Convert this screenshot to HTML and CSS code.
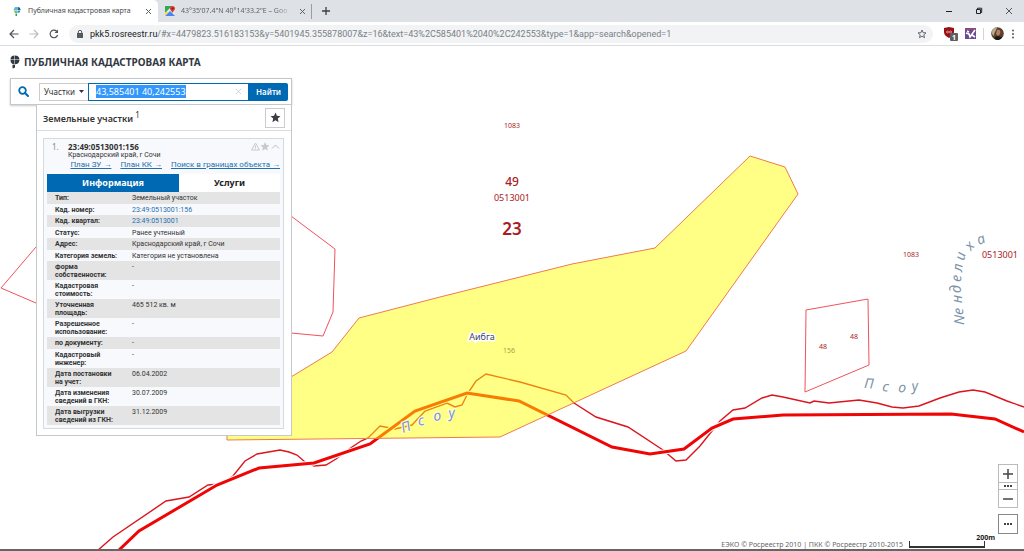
FILE: index.html
```html
<!DOCTYPE html>
<html lang="ru">
<head>
<meta charset="utf-8">
<title>Публичная кадастровая карта</title>
<link rel="stylesheet" href="styles.css">
</head>
<body>
<header class="browser">
  <div class="tabs">
    <div class="tab tab-active">
      <svg width="10" height="10" viewBox="0 0 10 10" aria-hidden="true"><path d="M3 1h2v3H1.500z" fill="#58b7e8"/><path d="M5.500 1a3 3 0 0 1 3 3h-3z" fill="#1b5f94"/><path d="M1.500 4.500H5V7H3z" fill="#7cc84c"/><path d="M5.500 4.500h3a3 3 0 0 1-3 2.500z" fill="#2c8fd0"/><path d="M3.500 7.500H5V10H3.500z" fill="#2e9c66"/></svg>
      <span class="tab-title">Публичная кадастровая карта</span>
      <button class="tab-close" aria-label="Закрыть вкладку"><svg width="7" height="7" viewBox="0 0 7 7"><path d="M1 1l5 5M6 1L1 6" stroke="#5f6368"/></svg></button>
    </div>
    <div class="tab">
      <svg width="10" height="10" viewBox="0 0 10 10" aria-hidden="true"><path d="M0 0h10v10H0z" fill="#e8e8e8"/><path d="M0 0h7L0 7z" fill="#34a853"/><path d="M0 10l5-5 5 5z" fill="#4285f4"/><path d="M0 6v4l4-4z" fill="#fbd34d"/><path d="M7.500 7C7 5 5 4.500 5 2.500a2.500 2.500 0 0 1 5 0C10 4.500 8 5 7.500 7z" fill="#dd3b2d"/><circle cx="7.500" cy="2.500" r="1" fill="#7b1d16"/></svg>
      <span class="tab-title tab-title-fade">43°35'07.4"N 40°14'33.2"E – Goo</span>
      <button class="tab-close" aria-label="Закрыть вкладку"><svg width="7" height="7" viewBox="0 0 7 7"><path d="M1 1l5 5M6 1L1 6" stroke="#5f6368"/></svg></button>
    </div>
    <button class="new-tab" aria-label="Новая вкладка"><svg width="8" height="8" viewBox="0 0 8 8"><path d="M4 0v8M0 4h8" stroke="#3c4043" stroke-width="1.300"/></svg></button>
    <div class="window-buttons">
      <button aria-label="Свернуть"><svg width="8" height="8" viewBox="0 0 8 8"><path d="M1 4.500h6" stroke="#222"/></svg></button>
      <button aria-label="Восстановить"><svg width="8" height="8" viewBox="0 0 8 8"><path d="M1.500 2.500h4v4h-4zM2.500 2V1.200h4.200v4.300H6" fill="none" stroke="#222"/></svg></button>
      <button aria-label="Закрыть"><svg width="8" height="8" viewBox="0 0 8 8"><path d="M1 1l6 6M7 1L1 7" stroke="#333" stroke-width=".8"/></svg></button>
    </div>
  </div>
  <div class="toolbar">
    <button aria-label="Назад"><svg width="10" height="10" viewBox="0 0 10 10"><path d="M9.500 5H1.200M5 1L1 5l4 4" fill="none" stroke="#50545a" stroke-width="1.200"/></svg></button>
    <button aria-label="Вперёд"><svg width="10" height="10" viewBox="0 0 10 10"><path d="M.5 5h8.300M5 1l4 4-4 4" fill="none" stroke="#b9bcc0" stroke-width="1.200"/></svg></button>
    <button aria-label="Обновить"><svg width="10" height="10" viewBox="0 0 10 10"><path d="M8.600 6A3.800 3.800 0 1 1 7.600 2.200" fill="none" stroke="#50545a" stroke-width="1.200"/><path d="M9 .5V4H5.500z" fill="#50545a"/></svg></button>
    <div class="address">
      <svg width="6" height="8" viewBox="0 0 6 8" aria-hidden="true"><path d="M0 3h6v5H0z" fill="#55595e"/><path d="M1.300 3.200V2a1.700 1.700 0 0 1 3.400 0v1.200" fill="none" stroke="#55595e"/></svg>
      <p class="url"><span class="host">pkk5.rosreestr.ru</span>/#x=4479823.516183153&amp;y=5401945.355878007&amp;z=16&amp;text=43%2C585401%2040%2C242553&amp;type=1&amp;app=search&amp;opened=1</p>
      <button aria-label="Добавить в закладки"><svg width="10" height="10" viewBox="0 0 10 10"><path d="M5 1l1.100 2.700 2.900.2-2.200 1.900.7 2.900L5 7.100 2.500 8.700l.7-2.900L1 3.900l2.900-.2z" fill="none" stroke="#55595e" stroke-width=".9"/></svg></button>
    </div>
    <div class="extensions">
      <button aria-label="Блокировщик"><svg width="15" height="15" viewBox="0 0 15 15"><path d="M6 1l5 1v4c0 3-2 4.500-5 6-3-1.500-5-3-5-6V2z" fill="#991016"/><circle cx="4.500" cy="6" r="1" fill="none" stroke="#d99"/><circle cx="7.500" cy="6" r="1" fill="none" stroke="#d99"/><rect x="7" y="7" width="8" height="8" rx="1" fill="#5c6063"/><text x="9" y="14" class="badge-text">1</text></svg></button>
      <button aria-label="Расширение"><svg width="11" height="11" viewBox="0 0 11 11"><path d="M0 0h11v11H0z" fill="#6b4a94"/><path d="M0 0h11v2H0z" fill="#8b4a78"/><path d="M1 5l3 1 1 3 5-7M2 3l2 1M7 7l3 2" fill="none" stroke="#fff" stroke-width="1.600"/></svg></button>
      <span class="separator"></span>
      <button aria-label="Профиль"><svg width="13" height="13" viewBox="0 0 13 13"><circle cx="6.500" cy="6.500" r="6.300" fill="#5b4032"/><path d="M1 4c1-3 3-4 5-4 0 3-3 5-3 9-2-1-2.500-3-2-5z" fill="#b6aa8d"/><path d="M6 3c3-1 4 1 3 4l-2 2-2-2z" fill="#b9805e"/><path d="M3 11l3-2 5 1c-2 4-6 4-8 1z" fill="#191717"/></svg></button>
      <button aria-label="Меню"><svg width="4" height="10" viewBox="0 0 4 10" fill="#55595e"><circle cx="2" cy="1.500" r="1"/><circle cx="2" cy="5" r="1"/><circle cx="2" cy="8.500" r="1"/></svg></button>
    </div>
  </div>
</header>

<main class="page">
  <svg class="map" role="img" aria-label="Кадастровая карта">
    <g transform="translate(0 -46)">
      <path class="parcel-line" d="M36 247L1 288l35 15 150 20 105 10 32 3 10-24 2-63-44-33-160-60z"/>
      <path class="parcel-line" d="M806 310l62-11 1 66-64 27z"/>
      <path class="river-thin" d="M97 551L113 537 166 501 189 497 208 485 220 484 233 476 245 461 257 454 280 450 289 452 297 455 305 462 314 466 326 465 336 459 352 447 361 441 368 438 380 426 395 429 412 425 425 411 447 403 455 407 462 405 468 393 476 381 486 374 520 382 566 395 574 403 596 417 628 427 663 450 676 461 686 460 700 446 720 421 733 410 745 408 762 398 772 395 783 397 810 403 814 401 829 403 859 400 877 403 892 407 903 408 919 406 940 398 959 392 973 390 985 392 1007 401 1024 407"/>
      <path class="river-halo" d="M118 551L139 531 217 485 259 468 314 463 370 444 415 411 467 393 519 401 612 447 650 454 684 449 712 428 733 419 783 415 951 414 995 419 1024 432"/>
      <path class="river-thick" d="M118 551L139 531 217 485 259 468 314 463 370 444 415 411 467 393 519 401 612 447 650 454 684 449 712 428 733 419 783 415 951 414 995 419 1024 432"/>
      <path class="selected" d="M227 440V415L291 377 332 352 359 318 440 297 572 264 655 248 750 156 785 167 798 194 686 351 500 437z"/>
      <g class="red-labels">
        <text x="512" y="128" class="t7">1083</text>
        <text x="512" y="186" class="t12">49</text>
        <text x="512" y="201" class="t9">0513001</text>
        <text x="512" y="235" class="t17">23</text>
        <text x="911" y="257" class="t7">1083</text>
        <text x="1000" y="258" class="t9">0513001</text>
        <text x="823" y="349" class="t7">48</text>
        <text x="854" y="339" class="t7">48</text>
      </g>
      <text x="509" y="353" class="label-parcel">156</text>
      <text x="482" y="340" class="label-town">Аибга</text>
      <text class="label-water water-halo" x="403 419 434 449" y="433 426 421 418" rotate="-20 -14 -8 -8">Псоу</text>
      <text class="label-water" x="864 882 898 912" y="388 391 392 391" rotate="4 6 4 -6">Псоу</text>
      <text class="label-water" x="964 963 962 961 961 962 964 971 979" y="325 315 303 293 282 272 261 251 245" rotate="-88 -88 -90 -90 -88 -84 -76 -50 -22">Nенделиха</text>
    </g>
  </svg>

  <section class="sidebar">
    <h1 class="brand">
      <svg width="10" height="14" viewBox="0 0 10 14" aria-hidden="true" fill="#333842"><path d="M4.500.5v4H.5c0-2.500 1.500-4 4-4zM5 .5c2.700 0 4.300 1.500 4.500 4H5zM.5 5h4v4.200c-2.500 0-4-1.400-4-4.200zM5 5h4.500C9.300 7.800 7.700 9.200 5 9.200zM2.500 9.700H5v2c0 1-.8 1.500-2.500 1.500z"/></svg>
      ПУБЛИЧНАЯ КАДАСТРОВАЯ КАРТА
    </h1>
    <form class="search">
      <span class="search-icon"><svg width="11" height="11" viewBox="0 0 11 11" aria-hidden="true"><circle cx="4.500" cy="4.500" r="3.300" fill="none" stroke="#0069b3" stroke-width="1.800"/><path d="M7 7l3 3" stroke="#0069b3" stroke-width="2" stroke-linecap="round"/></svg></span>
      <button type="button" class="kind">Участки <svg width="5" height="3" viewBox="0 0 5 3" aria-hidden="true"><path d="M0 0h5L2.500 3z" fill="#333"/></svg></button>
      <div class="field">
        <input id="query" type="text" value="43,585401 40,242553" aria-label="Поиск" autocomplete="off" spellcheck="false">
        <button type="button" class="clear" aria-label="Очистить"><svg width="7" height="7" viewBox="0 0 7 7"><path d="M1 1l5 5M6 1L1 6" stroke="#b5cbd8" stroke-width=".8"/></svg></button>
      </div>
      <button type="button" class="find">Найти</button>
    </form>
    <div class="results">
      <div class="results-head">
        <h2>Земельные участки <sup>1</sup></h2>
        <button class="favourites" aria-label="Избранное"><svg width="11" height="11" viewBox="0 0 10 10"><path d="M5 .5l1.300 3 3.200.3L7.100 6l.7 3.300L5 7.600 2.200 9.300 2.900 6 .5 3.800l3.200-.3z" fill="#3b3f45"/></svg></button>
      </div>
      <article class="card">
        <div class="card-head">
          <span class="number">1.</span>
          <div class="card-title"><h3>23:49:0513001:156</h3><p>Краснодарский край, г Сочи</p></div>
          <svg class="card-icons" width="30" height="9" viewBox="0 0 30 9" aria-hidden="true"><path d="M5.500 1l4 7h-8zM5.500 3.500v2.500M5.500 6.500v1" fill="none" stroke="#c6cacf"/><path d="M15 0l1.300 3 3.200.3L17.100 5.500l.7 3.300L15 7.100l-2.800 1.700.7-3.300-2.400-2.200 3.200-.3z" fill="#c6cacf"/><path d="M22 6.500L25.500 3 29 6.500" fill="none" stroke="#b9bec4"/></svg>
        </div>
        <nav class="links"><a href="#zu">План ЗУ →</a><a href="#kk">План КК →</a><a href="#search">Поиск в границах объекта →</a></nav>
        <div class="card-tabs"><button class="on">Информация</button><button>Услуги</button></div>
        <table class="info">
          <tr><th scope="row">Тип:</th><td>Земельный участок</td></tr>
          <tr><th scope="row">Кад. номер:</th><td><a href="#parcel">23:49:0513001:156</a></td></tr>
          <tr><th scope="row">Кад. квартал:</th><td><a href="#block">23:49:0513001</a></td></tr>
          <tr><th scope="row">Статус:</th><td>Ранее учтенный</td></tr>
          <tr><th scope="row">Адрес:</th><td>Краснодарский край, г Сочи</td></tr>
          <tr><th scope="row">Категория земель:</th><td>Категория не установлена</td></tr>
          <tr><th scope="row">Форма<br>собственности:</th><td>-</td></tr>
          <tr><th scope="row">Кадастровая<br>стоимость:</th><td>-</td></tr>
          <tr><th scope="row">Уточненная<br>площадь:</th><td>465 512 кв. м</td></tr>
          <tr><th scope="row">Разрешенное<br>использование:</th><td>-</td></tr>
          <tr><th scope="row">по документу:</th><td>-</td></tr>
          <tr><th scope="row">Кадастровый<br>инженер:</th><td>-</td></tr>
          <tr><th scope="row">Дата постановки<br>на учет:</th><td>06.04.2002</td></tr>
          <tr><th scope="row">Дата изменения<br>сведений в ГКН:</th><td>30.07.2009</td></tr>
          <tr><th scope="row">Дата выгрузки<br>сведений из ГКН:</th><td>31.12.2009</td></tr>
        </table>
      </article>
    </div>
  </section>

  <div class="zoom-controls">
    <div class="zoom-group">
      <button aria-label="Приблизить"><svg width="10" height="10" viewBox="0 0 10 10"><path d="M5 0v10M0 5h10" stroke="#444" stroke-width="1.500"/></svg></button>
      <button class="short" aria-label="Масштаб"><svg width="10" height="4" viewBox="0 0 10 4" fill="#444"><path d="M1 1h2v2H1zM4 1h2v2H4zM7 1h2v2H7z"/></svg></button>
      <button aria-label="Отдалить"><svg width="10" height="10" viewBox="0 0 10 10"><path d="M0 5h10" stroke="#444" stroke-width="1.500"/></svg></button>
    </div>
    <button class="more" aria-label="Ещё"><svg width="10" height="4" viewBox="0 0 10 4" fill="#444"><path d="M1 1h2v2H1zM4 1h2v2H4zM7 1h2v2H7z"/></svg></button>
  </div>
  <footer class="attribution">
    <p>ЕЭКО © Росреестр 2010 | ПКК © Росреестр 2010-2015</p>
    <div class="scale"><span>200m</span></div>
  </footer>
</main>
<script src="main.js"></script>
</body>
</html>
```
FILE: styles.css
```css
* { box-sizing: border-box; }
body {
  margin: 0;
  min-height: 100vh;
  display: flex;
  flex-direction: column;
  font: 8px/12px "Noto Sans", sans-serif;
  color: #333;
  background: #fff;
}
h1, h2, h3, p { margin: 0; }
button {
  display: flex;
  align-items: center;
  justify-content: center;
  margin: 0;
  padding: 0;
  border: 0;
  background: none;
  color: inherit;
  font: inherit;
}
svg { flex: none; }

.browser { border-bottom: 1px solid #dadce0; }
.tabs { display: flex; align-items: center; height: 22px; background: #dee1e6; font-size: 7px; }
.tab { display: flex; align-items: center; gap: 6px; width: 150px; height: 22px; padding: 0 2px 0 7px; color: #5f6368; }
.tab-active { width: 158px; padding: 0 6px 0 12px; background: #fff; border-radius: 0 5px 0 0; color: #45494d; }
.tab-title { flex: 1; overflow: hidden; white-space: nowrap; }
.tab-title-fade { -webkit-mask-image: linear-gradient(90deg, #000 85%, transparent); mask-image: linear-gradient(90deg, #000 85%, transparent); }
.tab-close { width: 8px; }
.new-tab { width: 28px; height: 15px; margin-left: 3px; border-left: 1px solid #9a9da1; }
.window-buttons { display: flex; gap: 22px; margin-left: auto; padding-right: 11px; }

.toolbar { display: flex; align-items: center; gap: 10px; height: 23px; padding: 0 9px; }
.address { flex: 1; display: flex; align-items: center; gap: 7px; height: 18px; padding: 0 6px 0 8px; border-radius: 9px; background: #f1f3f4; }
.url { flex: 1; min-width: 0; overflow: hidden; white-space: nowrap; font-family: Roboto, sans-serif; font-size: 9px; color: #7b7f84; }
.host { color: #202124; }
.extensions { display: flex; align-items: center; gap: 7px; }
.separator { width: 1px; height: 12px; background: #e3cdd5; }
.badge-text { font: bold 7px "Open Sans", sans-serif; fill: #fff; }

.page { flex: 1; position: relative; border-bottom: 2px solid #666; }
.map { position: absolute; inset: 0; width: 100%; height: 100%; overflow: hidden; }
.parcel-line { fill: none; stroke: #f0525c; }
.river-thin { fill: none; stroke: #dc141e; stroke-width: 1.4; }
.river-halo { fill: none; stroke: #fff; stroke-width: 5; }
.river-thick { fill: none; stroke: #f00505; stroke-width: 3; }
.selected { fill: rgba(255, 255, 0, .48); stroke: #ee7b4c; }
.red-labels { fill: #a91b25; text-anchor: middle; }
.t7 { font-size: 7px; }
.t9 { font-size: 9px; }
.t12 { font-size: 12px; font-weight: 500; }
.t17 { font-size: 17px; font-weight: 600; }
.label-parcel { font-size: 7px; fill: #b0a04c; text-anchor: middle; }
.label-town { font-size: 9px; fill: #3f4668; text-anchor: middle; paint-order: stroke; stroke: #fff; stroke-width: 3px; }
.label-water { font-size: 14px; font-style: italic; fill: #7b93a9; }
.water-halo { fill: #7d92c4; paint-order: stroke; stroke: #ffffd8; stroke-width: 2px; }

.sidebar { position: relative; width: 282px; margin-left: 10px; padding-top: 8px; }
.brand { display: flex; align-items: center; gap: 4px; height: 16px; font-size: 10px; line-height: 16px; color: #333842; white-space: nowrap; }
.search { display: flex; align-items: center; height: 27px; margin-top: 8px; padding-right: 3px; background: #fff; border: 1px solid #c5c8cb; box-shadow: 0 1px 2px #ccc; }
.search-icon { width: 28px; padding-right: 3px; display: flex; justify-content: center; }
.kind { width: 49px; height: 18px; gap: 4px; border: 1px solid #ccc; border-right: 0; }
.field { flex: 1; min-width: 0; display: flex; align-items: center; height: 18px; padding: 0 6px 0 7px; border: 1px solid #0069b3; }
.field input { flex: 1; min-width: 0; height: 14px; padding: 0; border: 0; outline: 0; background: none; color: #333; font: 9px/12px "Noto Sans", sans-serif; }
.field input::selection { background: #3297fd; color: #fff; }
.find { width: 39px; height: 18px; background: #0069b3; color: #fff; font-weight: 600; border-radius: 0 2px 2px 0; }
.results { margin-left: 26px; padding: 0 7px 6px 6px; background: #fff; border: 1px solid #c5c8cb; border-top: 0; }
.results-head { display: flex; align-items: center; justify-content: space-between; height: 26px; margin: 0 -7px 7px -6px; padding: 0 6px; border-bottom: 1px solid #ddd; }
.results-head h2 { font-size: 9px; line-height: 12px; font-weight: 600; }
.results-head sup { font-size: 8px; line-height: 8px; font-weight: 400; }
.favourites { width: 20px; height: 20px; border: 1px solid #ccc; }
.card { padding: 3px; border: 1px solid #d4dbe0; background: #f7f9fc; }
.card-head { display: flex; align-items: flex-start; height: 17px; }
.number { width: 21px; padding-left: 5px; line-height: 9px; color: #888; }
.card-title { flex: 1; font-size: 7px; line-height: 8px; white-space: nowrap; }
.card-title h3 { font-size: 8px; line-height: 9px; }
.card-title p { font-family: Roboto, sans-serif; }
.links { display: flex; justify-content: flex-end; gap: 9px; height: 15px; font-family: Roboto, "Noto Sans", sans-serif; line-height: 12px; white-space: nowrap; }
a { color: #236fb0; }
.card-tabs { display: flex; height: 18px; }
.card-tabs button { flex: 101; background: #fff; font-size: 9px; font-weight: 700; color: #222; }
.card-tabs .on { flex: 132; background: #0069b3; color: #fff; }
.info { width: 100%; border-collapse: collapse; table-layout: fixed; font: 7px/8px Roboto, sans-serif; }
.info th, .info td { padding: 2px 0 1px; text-align: left; vertical-align: top; white-space: nowrap; }
.info th { width: 85px; padding-left: 8px; }
.info a { text-decoration: none; }
.info tr:nth-child(odd) { background: #e4e4e4; }
.info tr:nth-child(odd) td { height: 12px; }

.zoom-controls { position: absolute; right: 6px; bottom: 15px; width: 20px; background: #fff; }
.zoom-group { margin-bottom: 6px; border: 1px solid #bbb; }
.zoom-group button { width: 100%; height: 17px; }
.zoom-group .short { height: 8px; border: solid #bbb; border-width: 1px 0; }
.more { width: 100%; height: 20px; border: 1px solid #888; }
.attribution { position: absolute; right: 29px; bottom: 0; display: flex; align-items: flex-end; gap: 6px; font-size: 7px; line-height: 9px; color: #666; white-space: nowrap; }
.scale { width: 86px; padding-bottom: 1px; }
.scale span { display: block; margin-bottom: -1px; text-align: right; line-height: 8px; font-weight: 700; color: #222; }
.scale::after { content: ""; display: block; width: 74px; height: 5px; border: solid #333; border-width: 0 1px 2px; }
```
FILE: main.js
```js
const query = document.getElementById('query');
query.focus({ preventScroll: true });
query.select();
```
